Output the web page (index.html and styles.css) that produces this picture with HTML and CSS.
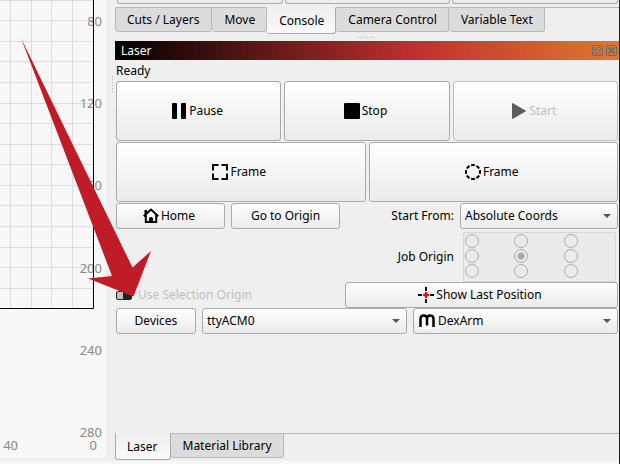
FILE: index.html
```html
<!DOCTYPE html>
<html lang="en">
<head>
<meta charset="utf-8">
<title>Laser control</title>
<link rel="stylesheet" href="styles.css">
</head>
<body>
<div class="app">
  <main class="workspace">
    <svg class="bed" width="106" height="458" viewBox="0 0 106 458" role="img" aria-label="Work area">
      <path class="bed-grid" d="M10.5 0V308M31.5 0V308M51.5 0V308M72.5 0V308M0 .5H93M0 20.5H93M0 41.5H93M0 61.5H93M0 82.5H93M0 103.5H93M0 123.5H93M0 144.5H93M0 164.5H93M0 185.5H93M0 205.5H93M0 226.5H93M0 247.5H93M0 267.5H93M0 288.5H93"/>
      <g class="bed-label" text-anchor="end">
        <text x="102" y="26">80</text>
        <text x="102" y="108">120</text>
        <text x="102" y="190">160</text>
        <text x="102" y="273">200</text>
        <text x="102" y="355">240</text>
        <text x="102" y="437">280</text>
        <text x="18" y="450">40</text>
        <text x="97" y="450">0</text>
      </g>
      <path class="bed-edge" d="M93.5 0V308.5H0"/>
    </svg>
    <section class="dock">
      <div class="stub-row">
        <span class="stub"></span><span class="stub"></span><span class="stub"></span>
      </div>
      <nav class="tabs">
        <button class="tab">Cuts / Layers</button>
        <button class="tab">Move</button>
        <button class="tab tab-active">Console</button>
        <button class="tab">Camera Control</button>
        <button class="tab">Variable Text</button>
      </nav>
      <div class="grip"></div>
      <header class="title">
        <span>Laser</span>
        <span class="title-tools">
          <button class="title-button" aria-label="Float">
            <svg width="11" height="11" viewBox="0 0 11 11"><rect x=".5" y=".5" width="10" height="10" rx="1.5"/><rect x="2.5" y="4.500" width="4" height="4" rx="1"/><path d="M4.500 4.500V3.500Q4.500 2.500 5.500 2.500H7.500Q8.500 2.500 8.500 3.500V5.500Q8.500 6.500 6.500 6.500"/></svg>
          </button>
          <button class="title-button" aria-label="Close">
            <svg width="11" height="11" viewBox="0 0 11 11"><rect x=".5" y=".5" width="10" height="10" rx="1.5"/><path class="title-cross" d="M2.500 2.500L8.500 8.500M8.500 2.500L2.500 8.500"/></svg>
          </button>
        </span>
      </header>
      <div class="laser">
        <p class="status">Ready</p>
        <div class="row row-big">
          <button class="btn btn-icon"><svg width="16" height="16" viewBox="0 0 16 16"><rect x="1" width="5" height="16" rx="1"/><rect x="10" width="5" height="16" rx="1"/></svg>Pause</button>
          <button class="btn btn-icon"><svg width="16" height="16" viewBox="0 0 16 16"><rect width="16" height="16" rx="1"/></svg>Stop</button>
          <button class="btn btn-icon" disabled><svg width="16" height="16" viewBox="0 0 16 16"><path fill="#5c5c5c" d="M1 0.500Q1 0 2 .3L14.500 7.400Q15.200 8 14.500 8.600L2 15.700Q1 16 1 15.500Z"/></svg>Start</button>
        </div>
        <div class="row row-big">
          <button class="btn btn-icon"><svg width="16" height="16" viewBox="0 0 16 16"><path class="ink" d="M1 6.500V1H6.500M9.500 1H15V6.500M15 9.500V15H9.500M6.500 15H1V9.500"/></svg>Frame</button>
          <button class="btn btn-icon"><svg width="16" height="16" viewBox="0 0 16 16"><circle class="ink" cx="8" cy="8" r="7" pathLength="80" stroke-dasharray="7 3" stroke-dashoffset="3.500"/></svg>Frame</button>
        </div>
        <div class="row row-wide">
          <button class="btn btn-icon"><svg width="16" height="16" viewBox="0 0 16 16"><path class="ink" d="M.7 8.300L8 1.600L15.300 8.300M2.800 7V14H13.200V7"/><path d="M1.500 2H4V6H1.500ZM6 15V10.500Q6 9 8 9Q10 9 10 10.500V15Z"/></svg>Home</button>
          <button class="btn">Go to Origin</button>
          <label class="caption" for="start-from">Start From:</label>
          <span class="combo combo-start">
            <select id="start-from"><option>Absolute Coords</option></select>
          </span>
        </div>
        <div class="row row-origin">
          <span class="caption" id="job-origin">Job Origin</span>
          <div class="origin" role="radiogroup" aria-labelledby="job-origin">
            <input type="radio" name="origin" aria-label="Top left" disabled>
            <input type="radio" name="origin" aria-label="Top" disabled>
            <input type="radio" name="origin" aria-label="Top right" disabled>
            <input type="radio" name="origin" aria-label="Left" disabled>
            <input type="radio" name="origin" aria-label="Center" disabled checked>
            <input type="radio" name="origin" aria-label="Right" disabled>
            <input type="radio" name="origin" aria-label="Bottom left" disabled>
            <input type="radio" name="origin" aria-label="Bottom" disabled>
            <input type="radio" name="origin" aria-label="Bottom right" disabled>
          </div>
        </div>
        <div class="row row-position">
          <label class="switch"><input type="checkbox" disabled>Use Selection Origin</label>
          <button class="btn btn-icon"><svg width="16" height="16" viewBox="0 0 16 16"><path class="ink" d="M0 8H4M12 8H16M8 0V4M8 12V16"/><path fill="none" stroke="#f00" stroke-width="2" d="M5 8H11M8 5V11"/><circle cx="8" cy="8" r="2" fill="#f00"/></svg>Show Last Position</button>
        </div>
        <div class="row row-wide row-devices">
          <button class="btn btn-devices">Devices</button>
          <span class="combo"><select aria-label="Port"><option>ttyACM0</option></select></span>
          <span class="combo combo-icon">
            <svg class="combo-mark" width="16" height="16" viewBox="0 0 16 16"><path fill="#fff" d="M0 0H16V16H0Z"/><path fill="none" stroke="#000" stroke-width="2.500" d="M1.500 14V6Q1.500 2.500 4.700 2.500Q8 2.500 8 6V12.500M8 6Q8 2.500 11.300 2.500Q14.500 2.500 14.500 6V14"/></svg>
            <select aria-label="Device"><option>DexArm</option></select>
          </span>
        </div>
      </div>
      <nav class="tabs tabs-bottom">
        <button class="tab tab-active">Laser</button>
        <button class="tab">Material Library</button>
      </nav>
    </section>
  </main>
  <footer class="statusbar"></footer>
</div>
<svg class="pointer" width="160" height="300" viewBox="0 0 160 300" aria-hidden="true"><path fill="#c01c28" d="M21 38L132.500 267.500L151 251L133.500 296.500L88 278.500L112 276Z"/></svg>
</body>
</html>
```
FILE: styles.css
```css
* { box-sizing: border-box; }

body {
  margin: 0;
  background: #efefef;
  color: #000;
  font: 12px/16px "Noto Sans", sans-serif;
}

button, select, input { font: inherit; color: inherit; margin: 0; }

.app {
  display: flex;
  flex-direction: column;
  min-height: 100vh;
  border-right: 1px solid #222;
}

.workspace { display: flex; flex: 1; }

.bed { flex: none; background: #f8f8f8; }
.bed-grid { stroke: #dcdcdc; fill: none; }
.bed-edge { stroke: #000; fill: none; }
.bed-label { fill: #888; font-size: 13px; }

.dock {
  flex: 1;
  min-width: 0;
  display: flex;
  flex-direction: column;
  padding-left: 9px;
}

.stub-row { display: flex; gap: 2px; padding: 0 1px 0 2px; }
.stub {
  flex: 1;
  height: 4px;
  border: 1px solid #aaa;
  border-top: 0;
  border-radius: 0 0 3px 3px;
  background: #ececec;
}

.tabs {
  display: flex;
  align-items: flex-start;
  height: 27px;
  margin-top: 3px;
  background: linear-gradient(#b8b8b8, #b8b8b8) top / 100% 1px no-repeat;
}
.tab {
  height: 25px;
  padding: 0 11px 0 12px;
  border: 1px solid #b8b8b8;
  border-left-width: 0;
  border-radius: 0 0 3px 3px;
  background: #dcdcdc;
  white-space: nowrap;
}
.tab:first-child { border-left-width: 1px; padding-left: 11px; padding-right: 12px; }
.tab-active {
  height: 27px;
  border-color: #aaa;
  border-top-color: #efefef;
  background: linear-gradient(#efefef, #fafafa);
}
.tabs-bottom { margin-top: auto; }

.grip {
  align-self: center;
  width: 18px;
  height: 1px;
  margin: 3px 0;
  background: repeating-linear-gradient(90deg, #aaa 0 1px, transparent 1px 3px);
}

.title {
  display: flex;
  align-items: center;
  justify-content: space-between;
  height: 19px;
  padding: 0 2px 0 6px;
  color: #fff;
  background: linear-gradient(90deg, #000, #c23030 60%, #de7830);
}
.title-tools { display: flex; gap: 3px; }
.title-button { display: flex; padding: 0; border: 0; background: none; }
.title-button svg { fill: none; stroke: #6b6b66; }
.title-cross { stroke-width: 2; }

.laser { position: relative; padding: 2px 1px 0 1px; }
.laser::before {
  content: "";
  position: absolute;
  left: -3px;
  top: 16px;
  width: 1px;
  height: 16px;
  background: repeating-linear-gradient(#aaa 0 1px, transparent 1px 3px);
}
.status { margin: 0; height: 19px; line-height: 17px; }

.row { display: flex; align-items: center; gap: 3px; }
.row-big { margin-bottom: 1px; }
.row-big .btn { flex: 1; height: 60px; }
.row-wide { gap: 6px; }

.btn {
  display: flex;
  align-items: center;
  justify-content: center;
  gap: 2px;
  height: 26px;
  padding: 0 8px;
  border: 1px solid #aaa;
  border-radius: 3px;
  background: linear-gradient(#fff, #ebebeb);
  white-space: nowrap;
}
.btn:disabled { border-color: #c0c0c0; color: #bebebe; }
.btn svg { flex: none; }
.btn-icon { padding-right: 11px; }
.ink { fill: none; stroke: #000; stroke-width: 2; }

.row-wide .btn { width: 109px; }
.row-wide .btn-devices { width: 80px; }
.caption { margin-left: auto; }

.combo {
  position: relative;
  flex: 1;
  display: flex;
  align-items: center;
}
.combo-start { flex: none; width: 158px; }
.combo select {
  appearance: none;
  width: 100%;
  height: 26px;
  padding: 0 20px 0 4px;
  border: 1px solid #aaa;
  border-radius: 3px;
  background: linear-gradient(#fff, #ebebeb);
}
.combo::after {
  content: "";
  position: absolute;
  right: 7px;
  border: 4px solid transparent;
  border-top-color: #555;
  border-bottom-width: 0;
}
.combo-icon select { padding-left: 24px; }
.combo-mark { position: absolute; left: 6px; }

.row-origin { gap: 9px; padding: 3px 2px 0 0; }
.origin {
  display: grid;
  grid-template-columns: 49px 50px 50px;
  gap: 1px 0;
  width: 153px;
  padding: 1px 1px 3px;
  border: 1px solid #d6d6d6;
  border-radius: 2px;
  background: #ebebeb;
}
.origin input {
  appearance: none;
  width: 14px;
  height: 14px;
  border: 1px solid #aaa;
  border-radius: 50%;
}
.origin input:checked { background: radial-gradient(circle, #aaa 3px, transparent 4px); }

.switch {
  flex: 1;
  display: flex;
  align-items: center;
  gap: 6px;
  color: #bebebe;
}
.switch input {
  appearance: none;
  width: 16px;
  height: 9px;
  border: 1px solid #222;
  border-radius: 2px;
  background: linear-gradient(90deg, #c0c0c0 6px, #222 6px);
}
.row-position .btn { flex: none; width: 273px; }

.statusbar { height: 3px; margin-top: 1px; background: #f8f8f8; }

.pointer { position: absolute; left: 0; top: 0; pointer-events: none; }
```
